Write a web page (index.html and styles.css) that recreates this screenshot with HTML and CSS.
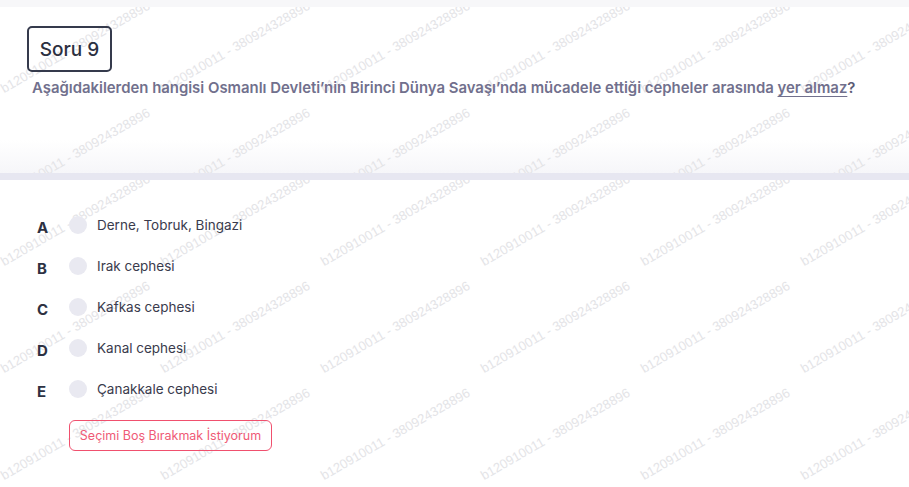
FILE: index.html
```html
<!DOCTYPE html>
<html lang="tr">
<head>
<meta charset="utf-8">
<title>Soru 9</title>
<link rel="stylesheet" href="styles.css">
</head>
<body>
<div class="page">
  <section class="head">
    <div class="wm" aria-hidden="true">
      <div class="wm-cell"><span>b120910011 - 380924328896</span></div>
      <div class="wm-cell"><span>b120910011 - 380924328896</span></div>
      <div class="wm-cell"><span>b120910011 - 380924328896</span></div>
      <div class="wm-cell"><span>b120910011 - 380924328896</span></div>
      <div class="wm-cell"><span>b120910011 - 380924328896</span></div>
      <div class="wm-cell"><span>b120910011 - 380924328896</span></div>
      <div class="wm-cell"><span>b120910011 - 380924328896</span></div>
      <div class="wm-cell"><span>b120910011 - 380924328896</span></div>
      <div class="wm-cell"><span>b120910011 - 380924328896</span></div>
      <div class="wm-cell"><span>b120910011 - 380924328896</span></div>
      <div class="wm-cell"><span>b120910011 - 380924328896</span></div>
      <div class="wm-cell"><span>b120910011 - 380924328896</span></div>
    </div>
    <div class="head-inner">
      <div class="qno">Soru 9</div>
      <p class="qtext">Aşağıdakilerden hangisi Osmanlı Devleti’nin Birinci Dünya Savaşı’nda mücadele ettiği cepheler arasında <u>yer almaz</u><span class="qmark">?</span></p>
    </div>
  </section>
  <section class="body">
    <div class="wm" aria-hidden="true">
      <div class="wm-cell"><span>b120910011 - 380924328896</span></div>
      <div class="wm-cell"><span>b120910011 - 380924328896</span></div>
      <div class="wm-cell"><span>b120910011 - 380924328896</span></div>
      <div class="wm-cell"><span>b120910011 - 380924328896</span></div>
      <div class="wm-cell"><span>b120910011 - 380924328896</span></div>
      <div class="wm-cell"><span>b120910011 - 380924328896</span></div>
      <div class="wm-cell"><span>b120910011 - 380924328896</span></div>
      <div class="wm-cell"><span>b120910011 - 380924328896</span></div>
      <div class="wm-cell"><span>b120910011 - 380924328896</span></div>
      <div class="wm-cell"><span>b120910011 - 380924328896</span></div>
      <div class="wm-cell"><span>b120910011 - 380924328896</span></div>
      <div class="wm-cell"><span>b120910011 - 380924328896</span></div>
      <div class="wm-cell"><span>b120910011 - 380924328896</span></div>
      <div class="wm-cell"><span>b120910011 - 380924328896</span></div>
      <div class="wm-cell"><span>b120910011 - 380924328896</span></div>
      <div class="wm-cell"><span>b120910011 - 380924328896</span></div>
      <div class="wm-cell"><span>b120910011 - 380924328896</span></div>
      <div class="wm-cell"><span>b120910011 - 380924328896</span></div>
    </div>
    <ul class="opts">
      <li class="opt"><span class="letter">A</span><span class="radio"></span><span class="otext">Derne, Tobruk, Bingazi</span></li>
      <li class="opt"><span class="letter">B</span><span class="radio"></span><span class="otext">Irak cephesi</span></li>
      <li class="opt"><span class="letter">C</span><span class="radio"></span><span class="otext">Kafkas cephesi</span></li>
      <li class="opt"><span class="letter">D</span><span class="radio"></span><span class="otext">Kanal cephesi</span></li>
      <li class="opt"><span class="letter">E</span><span class="radio"></span><span class="otext">Çanakkale cephesi</span></li>
    </ul>
    <button class="skip" type="button">Seçimi Boş Bırakmak İstiyorum</button>
  </section>
</div>
</body>
</html>
```

FILE: styles.css
```css
* { box-sizing: border-box; }
html, body { margin: 0; padding: 0; }
body {
  background: #f7f7f9;
  font-family: "Inter", "Noto Sans", sans-serif;
  width: 909px;
  height: 487px;
  overflow: hidden;
}
.page {
  padding-top: 7px;
}
.head {
  position: relative;
  height: 173px;
  background: linear-gradient(to bottom, #ffffff 0, #ffffff 80%, #f6f6f9 100%);
  border-bottom: 7px solid #e7e7f1;
  overflow: hidden;
}
.body {
  position: relative;
  height: 307px;
  background: #ffffff;
  overflow: hidden;
  padding: 24px 0 0 37px;
}
.wm {
  position: absolute;
  inset: 0;
  display: grid;
  grid-template-columns: repeat(6, 160px);
  grid-auto-rows: 107px;
  z-index: 0;
  pointer-events: none;
}
.wm-cell {
  display: flex;
  align-items: flex-end;
  padding: 0 0 19px 5px;
}
.wm-cell span {
  display: block;
  white-space: nowrap;
  font-family: "Liberation Sans", Arial, sans-serif;
  font-size: 13px;
  line-height: 13px;
  color: #e4e4e7;
  transform: rotate(-30deg);
  transform-origin: 0 100%;
}
.head-inner {
  position: relative;
  z-index: 1;
  padding: 19px 0 0 27px;
}
.qno {
  width: 85px;
  height: 46px;
  border: 2px solid #353a4c;
  border-radius: 5px;
  display: flex;
  align-items: center;
  justify-content: center;
  font-size: 19px;
  font-weight: 500;
  color: #2c3041;
}
.qtext {
  margin: 6px 0 0 5px;
  font-size: 14.9px;
  line-height: 21px;
  font-weight: 600;
  color: #71708d;
}
.qtext u {
  text-underline-offset: 3px;
}
.qmark {
  color: #5b5b75;
}
.opts {
  position: relative;
  z-index: 1;
  list-style: none;
  margin: 0;
  padding: 0;
}
.opt {
  height: 41px;
  display: flex;
  align-items: center;
}
.letter {
  width: 32px;
  margin-top: 5px;
  font-size: 15px;
  font-weight: 700;
  color: #2d3142;
}
.radio {
  width: 18px;
  height: 18px;
  border-radius: 50%;
  background: #e9e9f1;
  margin-right: 10px;
  flex: none;
}
.otext {
  font-size: 13.5px;
  color: #3a3b4d;
}
.skip {
  position: relative;
  z-index: 1;
  margin: 11px 0 0 32px;
  width: 203px;
  height: 31px;
  padding: 0;
  background: transparent;
  border: 1px solid #f0506e;
  border-radius: 6px;
  font-family: inherit;
  font-size: 12.5px;
  color: #ef5a76;
}
```
